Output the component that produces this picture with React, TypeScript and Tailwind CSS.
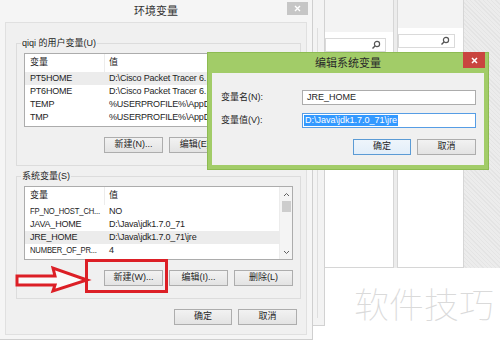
import React from "react";

const font = "font-['Liberation_Sans','Noto_Sans_CJK_SC',sans-serif]";

type Row = { name: string; value: string; selected?: boolean; tight?: boolean };

// 右半边被“编辑系统变量”盖住，只写出看得见的部分
const userVars: Row[] = [
  { name: "PT5HOME", value: "D:\\Cisco Packet Tracer 6.", selected: true },
  { name: "PT6HOME", value: "D:\\Cisco Packet Tracer 6." },
  { name: "TEMP", value: "%USERPROFILE%\\AppDa" },
  { name: "TMP", value: "%USERPROFILE%\\AppDa" },
];

const sysVars: Row[] = [
  { name: "FP_NO_HOST_CH...", value: "NO", tight: true },
  { name: "JAVA_HOME", value: "D:\\Java\\jdk1.7.0_71" },
  { name: "JRE_HOME", value: "D:\\Java\\jdk1.7.0_71\\jre", selected: true },
  { name: "NUMBER_OF_PR...", value: "4", tight: true },
];

function Btn({ label, w = "w-[59px]", primary = false }: { label: string; w?: string; primary?: boolean }) {
  return (
    <div
      className={`${w} h-[16px] flex items-center justify-center text-[9px] text-[#1e1e1e] border ${
        primary
          ? "border-[#5b9bd5] bg-[linear-gradient(#eef5fb,#e2eef9)]"
          : "border-[#adadad] bg-[linear-gradient(#f2f2f2,#e3e3e3)]"
      }`}
    >
      {label}
    </div>
  );
}

function VarList({ rows, scroll }: { rows: Row[]; scroll?: boolean }) {
  return (
    <div className="ml-[7px] mt-[4px] w-[269px] h-[74px] bg-white border border-[#acacac] flex overflow-hidden">
      <div className="flex-1 flex flex-col min-w-0">
        <div className="h-[18px] flex items-center text-[9px] text-[#222] shrink-0">
          <div className="w-[80px] pl-[5px] h-full flex items-center border-r border-[#ececec]">变量</div>
          <div className="pl-[4px]">值</div>
        </div>
        {rows.map((r) => (
          <div
            key={r.name}
            className={`h-[13px] flex items-center text-[9px] tracking-[-0.2px] text-[#1e1e1e] whitespace-nowrap ${
              r.selected ? "bg-[#ececec]" : ""
            }`}
          >
            <div className="w-[80px] pl-[5px] shrink-0">
              <span className={r.tight ? "inline-block scale-x-[0.85] origin-left" : ""}>{r.name}</span>
            </div>
            <div className="pl-[4px]">{r.value}</div>
          </div>
        ))}
      </div>
      {scroll && (
        <div className="w-[13px] flex flex-col items-center bg-[#f4f4f4] border-l border-[#ececec]">
          <div className="h-[14px] flex items-center">
            <svg width="7" height="5" viewBox="0 0 7 5">
              <path d="M1 4 L3.5 1.5 L6 4" fill="none" stroke="#606060" strokeWidth="1" />
            </svg>
          </div>
          <div className="w-[9px] h-[11px] bg-[#cdcdcd]" />
          <div className="flex-1" />
          <div className="h-[14px] flex items-center">
            <svg width="7" height="5" viewBox="0 0 7 5">
              <path d="M1 1 L3.5 3.5 L6 1" fill="none" stroke="#606060" strokeWidth="1" />
            </svg>
          </div>
        </div>
      )}
    </div>
  );
}

function Group({
  title,
  rows,
  buttons,
  scroll,
  mt,
}: {
  title: string;
  rows: Row[];
  buttons: string[];
  scroll?: boolean;
  mt: string;
}) {
  return (
    <fieldset className={`${mt} ml-[10px] w-[285px] h-[129px] border border-[#dcdcdc]`}>
      <legend className="ml-[4px] px-[1px] text-[9px] leading-[12px] text-[#1e1e1e]">{title}</legend>
      <VarList rows={rows} scroll={scroll} />
      <div className="mt-[10px] pr-[7px] flex justify-end gap-[6px]">
        {buttons.map((b) => (
          <Btn key={b} label={b} />
        ))}
      </div>
    </fieldset>
  );
}

function Magnifier() {
  return (
    <svg width="10" height="10" viewBox="0 0 10 10">
      <circle cx="6" cy="4" r="2.6" fill="none" stroke="#555" strokeWidth="1.2" />
      <path d="M4.2 5.8 L1.5 8.5" stroke="#555" strokeWidth="1.4" />
    </svg>
  );
}

function SidePanel({ left, w, head, boxW }: { left: string; w: string; head: string; boxW: string }) {
  return (
    <div className={`absolute top-0 ${left} ${w} h-[268px] bg-white border-x border-b border-[#d6d6d6] flex flex-col`}>
      <div className={`${head} bg-[#f3f3f3] shrink-0`} />
      <div className={`mt-[6px] ${boxW} h-[14px] border border-[#dadada] bg-white flex items-center justify-end pr-[4px]`}>
        <Magnifier />
      </div>
    </div>
  );
}

export default function App() {
  return (
    <div className={`relative w-[500px] h-[342px] bg-white overflow-hidden ${font}`}>
      {/* desktop behind */}
      <div className="absolute top-0 left-[463px] w-[37px] h-[268px] bg-[repeating-linear-gradient(45deg,#ececec_0px,#ececec_2px,#e4e4e4_2px,#e4e4e4_3px)]" />
      <div className="absolute top-0 left-[393px] w-[5px] h-[268px] bg-[#ececec]" />
      <SidePanel left="left-[324px]" w="w-[70px]" head="h-[32px]" boxW="w-[61px]" />
      <SidePanel left="left-[397px]" w="w-[67px]" head="h-[28px]" boxW="w-[57px]" />
      <div className="absolute top-0 left-0 w-[325px] h-[326px] bg-[#f3f3f3] border-r border-b border-[#d2d2d2]">
        <div className="ml-auto mr-[6px] mt-[28px] w-[1px] h-[290px] bg-[#dedede]" />
      </div>

      {/* 环境变量 */}
      <div className="absolute top-0 left-0 w-[313px] h-[340px] bg-[#f5f5f5] border-r border-b border-[#cfcfcf] flex flex-col">
        <div className="relative h-[22px] shrink-0 flex items-center justify-center text-[11px] text-[#333]">
          环境变量
          <div className="absolute right-[4px] top-[2px] w-[21px] h-[13px] bg-[#c6c6c6] flex items-center justify-center">
            <svg width="7" height="7" viewBox="0 0 7 7">
              <path d="M1 1 L6 6 M6 1 L1 6" stroke="white" strokeWidth="1.4" />
            </svg>
          </div>
        </div>
        <div className="mx-[5px] h-[313px] bg-[#f0f0f0] border border-[#e0e0e0] flex flex-col">
          <Group
            mt="mt-[14px]"
            title="qiqi 的用户变量(U)"
            rows={userVars}
            buttons={["新建(N)...", "编辑(E)...", "删除(D)"]}
          />
          <Group
            mt="mt-[4px]"
            title="系统变量(S)"
            rows={sysVars}
            scroll
            buttons={["新建(W)...", "编辑(I)...", "删除(L)"]}
          />
          <div className="mt-[10px] pr-[9px] flex justify-end gap-[6px]">
            <Btn label="确定" w="w-[58px]" />
            <Btn label="取消" w="w-[59px]" />
          </div>
        </div>
      </div>

      {/* 编辑系统变量 */}
      <div className="absolute left-[207px] top-[52px] w-[282px] h-[118px] bg-[#a2cc68] border border-[#8dbb52] flex flex-col">
        <div className="relative h-[20px] shrink-0 flex items-center justify-center text-[11px] text-[#2a2a2a]">
          编辑系统变量
          <div className="absolute right-[3px] -top-[1px] w-[22px] h-[16px] bg-[#c9453f] flex items-center justify-center">
            <svg width="7" height="7" viewBox="0 0 7 7">
              <path d="M1 1 L6 6 M6 1 L1 6" stroke="white" strokeWidth="1.5" />
            </svg>
          </div>
        </div>
        <div className="mx-[4px] h-[92px] bg-[#f0f0f0] flex flex-col pl-[9px] pr-[8px] text-[9px] text-[#1e1e1e]">
          <div className="mt-[17px] flex items-center h-[15px]">
            <div className="w-[81px]">变量名(N):</div>
            <div className="w-[174px] h-[15px] bg-white border border-[#acacac] flex items-center pl-[4px]">JRE_HOME</div>
          </div>
          <div className="mt-[8px] flex items-center h-[15px]">
            <div className="w-[81px]">变量值(V):</div>
            <div className="w-[174px] h-[15px] bg-white border border-[#569de5] flex items-center pl-[1px]">
              <span className="bg-[#3399ff] text-white px-[1px] leading-[11px]">D:\Java\jdk1.7.0_71\jre</span>
            </div>
          </div>
          <div className="mt-[11px] flex justify-end gap-[6px]">
            <Btn label="确定" w="w-[58px]" primary />
            <Btn label="取消" w="w-[59px]" />
          </div>
        </div>
      </div>

      {/* 红色标注 */}
      <div className="absolute left-[85px] top-[259px] w-[83px] h-[34px] border-[3px] border-[#dc1f26]" />
      <svg className="absolute left-[14px] top-[264px]" width="78" height="32" viewBox="0 0 78 32">
        <polygon
          points="3,12 41,12 39,4 73,16 39,27 41,21 3,21"
          fill="#fafafa"
          stroke="#dc1f26"
          strokeWidth="3"
          strokeLinejoin="miter"
        />
      </svg>

      {/* 水印 */}
      <div className="absolute left-[354px] top-[283px] text-[35px] leading-[40px] font-thin text-[#dadada] font-['Noto_Sans_CJK_SC',sans-serif]">
        软件技巧
      </div>
    </div>
  );
}
